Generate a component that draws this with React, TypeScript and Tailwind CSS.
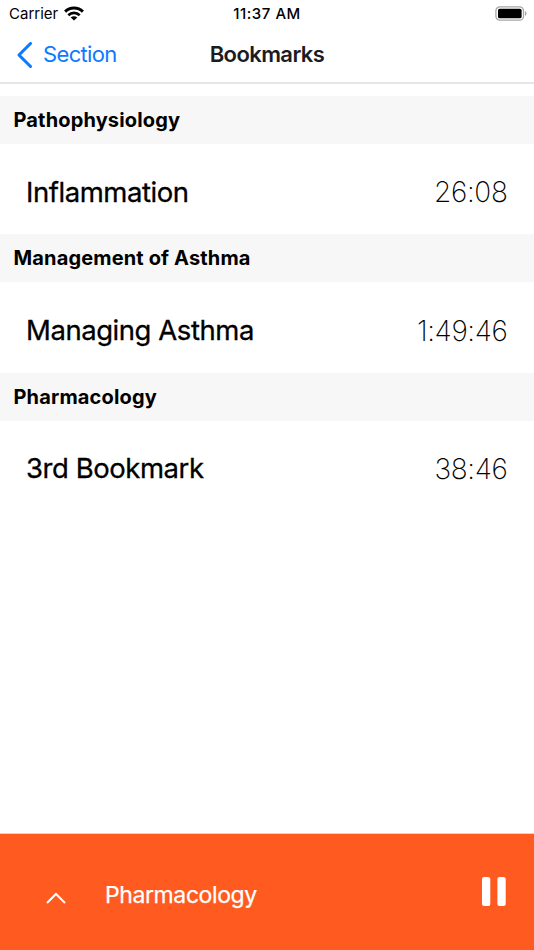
import { clsx } from 'clsx';

type Bookmark = {
    section: string;
    title: string;
    time: string;
};

const bookmarks: Bookmark[] = [
    { section: 'Pathophysiology', title: 'Inflammation', time: '26:08' },
    { section: 'Management of Asthma', title: 'Managing Asthma', time: '1:49:46' },
    { section: 'Pharmacology', title: '3rd Bookmark', time: '38:46' },
];

function StatusBar() {
    return (
        <div className="grid h-[27px] grid-cols-3 items-center pl-[9px] pr-[7px] text-[15px] leading-none">
            <div className="flex items-center gap-[6px]">
                <span>Carrier</span>
                <svg className="mb-px" width="20" height="15" viewBox="0 0 20 15" fill="none" stroke="black">
                    <path d="M1.1 5.6C6 .7 14 .7 18.9 5.6" strokeWidth="2.9" />
                    <path d="M4.3 9.2c3.2-3 8.2-3 11.4 0" strokeWidth="2.7" />
                    <path d="M10 14.6 6.7 11.4c1.8-1.6 4.8-1.6 6.6 0Z" fill="black" stroke="none" />
                </svg>
            </div>
            <span className="-ml-[2px] text-center font-medium tracking-[0.55px]">11:37 AM</span>
            <svg className="justify-self-end" width="32" height="15" viewBox="0 0 32 15">
                <rect x=".9" y=".8" width="27.6" height="13.4" rx="4" fill="none" stroke="#a6a6a6" strokeWidth="1.3" />
                <rect x="3" y="2.7" width="23.6" height="9.6" rx="1.6" fill="black" />
                <path d="M30 5v5c2-1 2-4 0-5Z" fill="#a6a6a6" />
            </svg>
        </div>
    );
}

function NavBar() {
    return (
        <div className="grid h-[57px] grid-cols-3 items-center border-b-2 border-[#e6e6e6] text-[22px]">
            <button className="flex items-center gap-[11px] pl-[17px] tracking-[-0.65px] text-[#0a7aff]">
                <svg width="15" height="26" viewBox="0 0 15 26" fill="none" stroke="currentColor" strokeWidth="3">
                    <path d="M13.5 1.5 2 13l11.5 11.5" strokeLinecap="round" strokeLinejoin="round" />
                </svg>
                <span>Section</span>
            </button>
            <h1 className="text-center font-semibold tracking-[-0.6px] text-[#1c1c1e]">Bookmarks</h1>
        </div>
    );
}

function BookmarkRow({ section, title, time }: Bookmark) {
    return (
        <section>
            <h2 className="h-[48px] bg-[#f7f7f7] pl-[13.5px] text-[20px] leading-[48px] font-bold tracking-[0.15px]">
                {section}
            </h2>
            <div className="flex h-[90.4px] items-center justify-between pt-[6px] pr-[26.5px] pl-[26px] text-[28px]">
                <span className="text-[27.5px] tracking-[-0.45px] [-webkit-text-stroke:0.3px_black]">{title}</span>
                <span className="font-extralight tracking-[-0.35px]">{time}</span>
            </div>
        </section>
    );
}

function Player() {
    return (
        <div className="flex h-[117px] items-center border-t border-[#ffc9b5] bg-[#ff5a1f] pt-[7px] pr-[28px] pl-[46px] text-white">
            <svg className="mt-[5px]" width="20" height="12" viewBox="0 0 20 12" fill="none" stroke="white" strokeWidth="2">
                <path d="m1 11 9-9 9 9" />
            </svg>
            <span className="ml-[39px] flex-1 text-[23px] tracking-[-0.4px] [-webkit-text-stroke:0.25px_white]">
                Pharmacology
            </span>
            <svg className="mb-[8px]" width="24" height="29" viewBox="0 0 24 29" fill="white">
                <rect width="8.3" height="29" rx="2" />
                <rect x="15.4" width="8.3" height="29" rx="2" />
            </svg>
        </div>
    );
}

export default function App() {
    return (
        <div className={clsx('flex h-screen flex-col overflow-hidden bg-white text-black', "font-['Inter',sans-serif]")}>
            <StatusBar />
            <NavBar />
            <main className="flex-1 pt-[12px]">
                {bookmarks.map((item) => (
                    <BookmarkRow key={item.section} {...item} />
                ))}
            </main>
            <Player />
        </div>
    );
}
